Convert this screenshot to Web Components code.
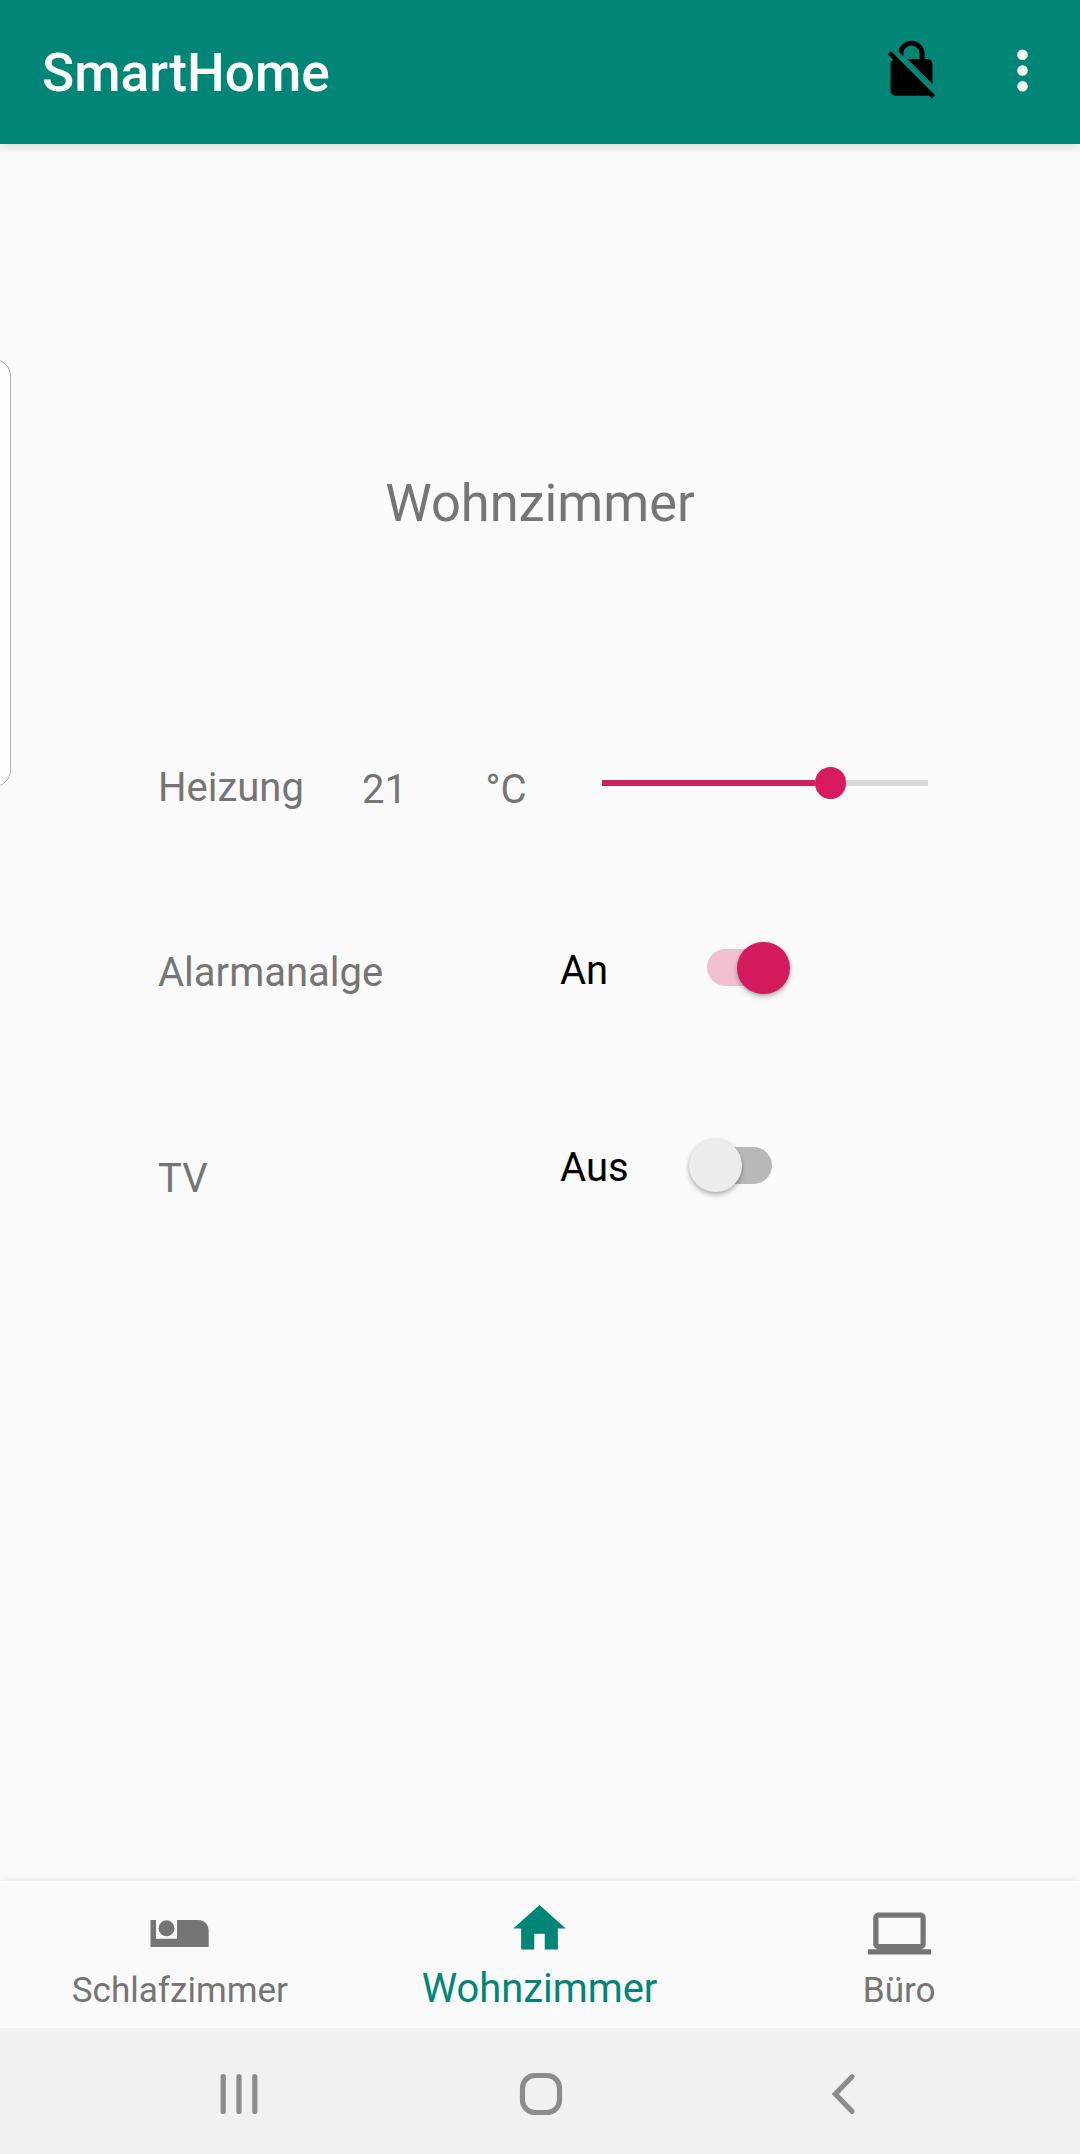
<!DOCTYPE html>
<html lang="de">
<head>
<meta charset="utf-8">
<title>SmartHome</title>
<style>
  html, body { margin: 0; padding: 0; }
  body { background: #fafafa; font-family: Roboto, "Liberation Sans", sans-serif; color: #757575; }
</style>
</head>
<body>
<smart-home-app></smart-home-app>
<script>
const define = (name, html) => {
  const template = document.createElement('template');
  template.innerHTML = html;
  customElements.define(name, class extends HTMLElement {
    constructor() {
      super();
      this.attachShadow({ mode: 'open' }).append(template.content.cloneNode(true));
    }
  });
};

define('app-bar', `
  <style>
    :host { display: flex; align-items: flex-start; box-sizing: border-box; height: 143.5px; padding-left: 42px;
            background: #008577; box-shadow: 0 3px 10px rgba(0,0,0,.12); position: relative; flex: none; }
    h1 { margin: 42px auto 0 0; font-size: 53.2px; line-height: 62px; font-weight: 500; color: #fff; }
    svg { display: block; width: 63px; height: 63px; }
    .lock { margin: 37.6px 48.5px 0 0; }
    .more { margin: 38.7px 26px 0 0; fill: #fff; }
  </style>
  <h1><slot></slot></h1>
  <svg class="lock" viewBox="0 0 24 24"><path d="M21 21.78L4.22 5 3 6.22l2.04 2.04C4.42 8.6 4 9.25 4 10v10c0 1.1.9 2 2 2h12c.23 0 .45-.05.66-.12L19.78 23 21 21.78zM8.9 6c0-1.71 1.39-3.1 3.1-3.1s3.1 1.39 3.1 3.1v2h-4.66L20 17.56V10c0-1.1-.9-2-2-2h-1V6c0-2.76-2.24-5-5-5-2.5 0-4.58 1.83-4.93 4.1L8.9 6.93V6z"/></svg>
  <svg class="more" viewBox="0 0 24 24"><circle cx="12" cy="6" r="2"/><circle cx="12" cy="12" r="2"/><circle cx="12" cy="18" r="2"/></svg>
`);

define('edge-handle', `
  <style>
    :host { display: block; position: absolute; left: -40px; top: 359px; width: 51px; height: 428px;
            box-sizing: border-box; border: 1.5px solid #b0b0b0; border-radius: 17px; background: #fdfdfd; }
  </style>
`);

define('value-slider', `
  <style>
    :host { display: flex; align-items: center; width: 326px; height: 32px; }
    .done { width: 212.5px; height: 5.25px; background: #d0205f; }
    .thumb { width: 31.5px; height: 31.5px; border-radius: 50%; background: #d81b60; flex: none; }
    .rest { flex: 1; height: 5.25px; background: #d8d8d8; }
  </style>
  <span class="done"></span><span class="thumb"></span><span class="rest"></span>
`);

define('toggle-switch', `
  <style>
    :host { display: flex; align-items: center; width: 83px; height: 52.5px; --track: #b8b8b8; --thumb: #ececec; }
    :host([on]) { --track: #f1c0d3; --thumb: #d41a5e; }
    .track { display: flex; align-items: center; justify-content: flex-start; width: 74px; height: 37px;
             margin-left: 9px; border-radius: 18.5px; background: var(--track); }
    .thumb { width: 52.5px; height: 52.5px; margin-left: -9px; border-radius: 50%; flex: none;
             background: var(--thumb); box-shadow: 0 3px 5px rgba(0,0,0,.27), 0 0 3px rgba(0,0,0,.1); }
    :host([on]) .track { margin: 0 9px 0 0; justify-content: flex-end; }
    :host([on]) .thumb { margin: 0 -9px 0 0; }
  </style>
  <span class="track"><span class="thumb"></span></span>
`);

define('device-row', `
  <style>
    :host { display: flex; align-items: flex-start; font-size: 40px; line-height: 48px; white-space: nowrap; }
  </style>
  <slot></slot>
`);

define('room-panel', `
  <style>
    :host { display: flex; flex-direction: column; flex: 1; padding-top: 328.9px; }
    h2 { margin: 0; font-size: 52.4px; line-height: 62px; font-weight: 400; text-align: center; }
    device-row { padding-left: 158px; }
    .heat { margin-top: 228.6px; height: 50px; }
    .alarm { margin-top: 128.75px; height: 54px; }
    .tv { margin-top: 143.5px; }
    .heat span:nth-child(1) { width: 204px; margin-top: 1px; }
    .heat span:nth-child(2) { width: 123.5px; margin-top: 3px; }
    .heat span:nth-child(3) { width: 116.5px; margin-top: 3px; }
    .heat value-slider { margin-top: 4px; }
    .name { width: 402px; }
    .state { color: #000; }
    .alarm .name { margin-top: 7.25px; }
    .alarm .state { width: 146.7px; margin-top: 5.25px; }
    .tv .name { margin-top: 15.75px; }
    .tv .state { width: 129.2px; margin-top: 4.75px; }
  </style>
  <h2>Wohnzimmer</h2>
  <device-row class="heat"><span>Heizung</span><span>21</span><span>°C</span><value-slider></value-slider></device-row>
  <device-row class="alarm"><span class="name">Alarmanalge</span><span class="state">An</span><toggle-switch on></toggle-switch></device-row>
  <device-row class="tv"><span class="name">TV</span><span class="state">Aus</span><toggle-switch></toggle-switch></device-row>
`);

define('nav-item', `
  <style>
    :host { display: flex; flex-direction: column; align-items: center; flex: 1; font-size: 35.1px; fill: #757575; }
    :host([active]) { font-size: 39.9px; color: #008577; fill: #008577; }
    .icon { display: flex; justify-content: center; height: 84px; }
    .label { line-height: 48px; margin-top: .5px; }
    :host([active]) .label { margin-top: -.5px; }
  </style>
  <span class="icon"><slot name="icon"></slot></span>
  <span class="label"><slot></slot></span>
`);

define('room-nav', `
  <style>
    :host { display: flex; flex: none; box-sizing: border-box; height: 147px; padding-right: 1px;
            background: #fafafa; box-shadow: 0 -1px 8px rgba(0,0,0,.09); }
    svg { display: block; flex: none; }
    .bed { width: 59px; height: 27px; margin: 39px 1px 0 0; }
    .home { width: 63px; height: 63px; margin: 16px 1px 0 0; }
    .laptop { width: 63px; height: 63px; margin-top: 20.5px; }
  </style>
  <nav-item><svg class="bed" slot="icon" viewBox="0 0 59 27"><path d="M.5 0H6v18.7h21V0h21.2c6 0 10.5 4.7 10.5 10.5V27H.5z"/><circle cx="16.5" cy="8.3" r="8"/></svg>Schlafzimmer</nav-item>
  <nav-item active><svg class="home" slot="icon" viewBox="0 0 24 24"><path d="M10 20v-6h4v6h5v-8h3L12 3 2 12h3v8z"/></svg>Wohnzimmer</nav-item>
  <nav-item><svg class="laptop" slot="icon" viewBox="0 0 24 24"><path d="M20 18c1.1 0 1.99-.9 1.99-2L22 6c0-1.1-.9-2-2-2H4c-1.1 0-2 .9-2 2v10c0 1.1.9 2 2 2H0v2h24v-2h-4zM4 6h16v10H4V6z"/></svg>Büro</nav-item>
`);

define('system-nav', `
  <style>
    :host { display: flex; flex: none; justify-content: space-between; box-sizing: border-box; height: 126px;
            padding: 44px 217px 0 219px; background: #f1f1f1; z-index: 1; }
    svg { display: block; width: 44px; height: 44px; fill: none; stroke: #8c8c8c; stroke-width: 5.2; stroke-linecap: round; }
  </style>
  <svg viewBox="0 0 44 44"><path d="M4.2 4.6v34.8M20 4.6v34.8M35.8 4.6v34.8"/></svg>
  <svg viewBox="0 0 44 44"><rect x="3.5" y="3.5" width="37" height="37" rx="12.5"/></svg>
  <svg viewBox="0 0 44 44"><path d="M33 4.700L16.300 22 33 39.300"/></svg>
`);

define('smart-home-app', `
  <style>
    :host { display: flex; flex-direction: column; position: relative; width: 1080px; height: 2154px;
            background: #fafafa; overflow: hidden; }
  </style>
  <app-bar>SmartHome</app-bar>
  <room-panel></room-panel>
  <room-nav></room-nav>
  <system-nav></system-nav>
  <edge-handle></edge-handle>
`);
</script>
</body>
</html>
